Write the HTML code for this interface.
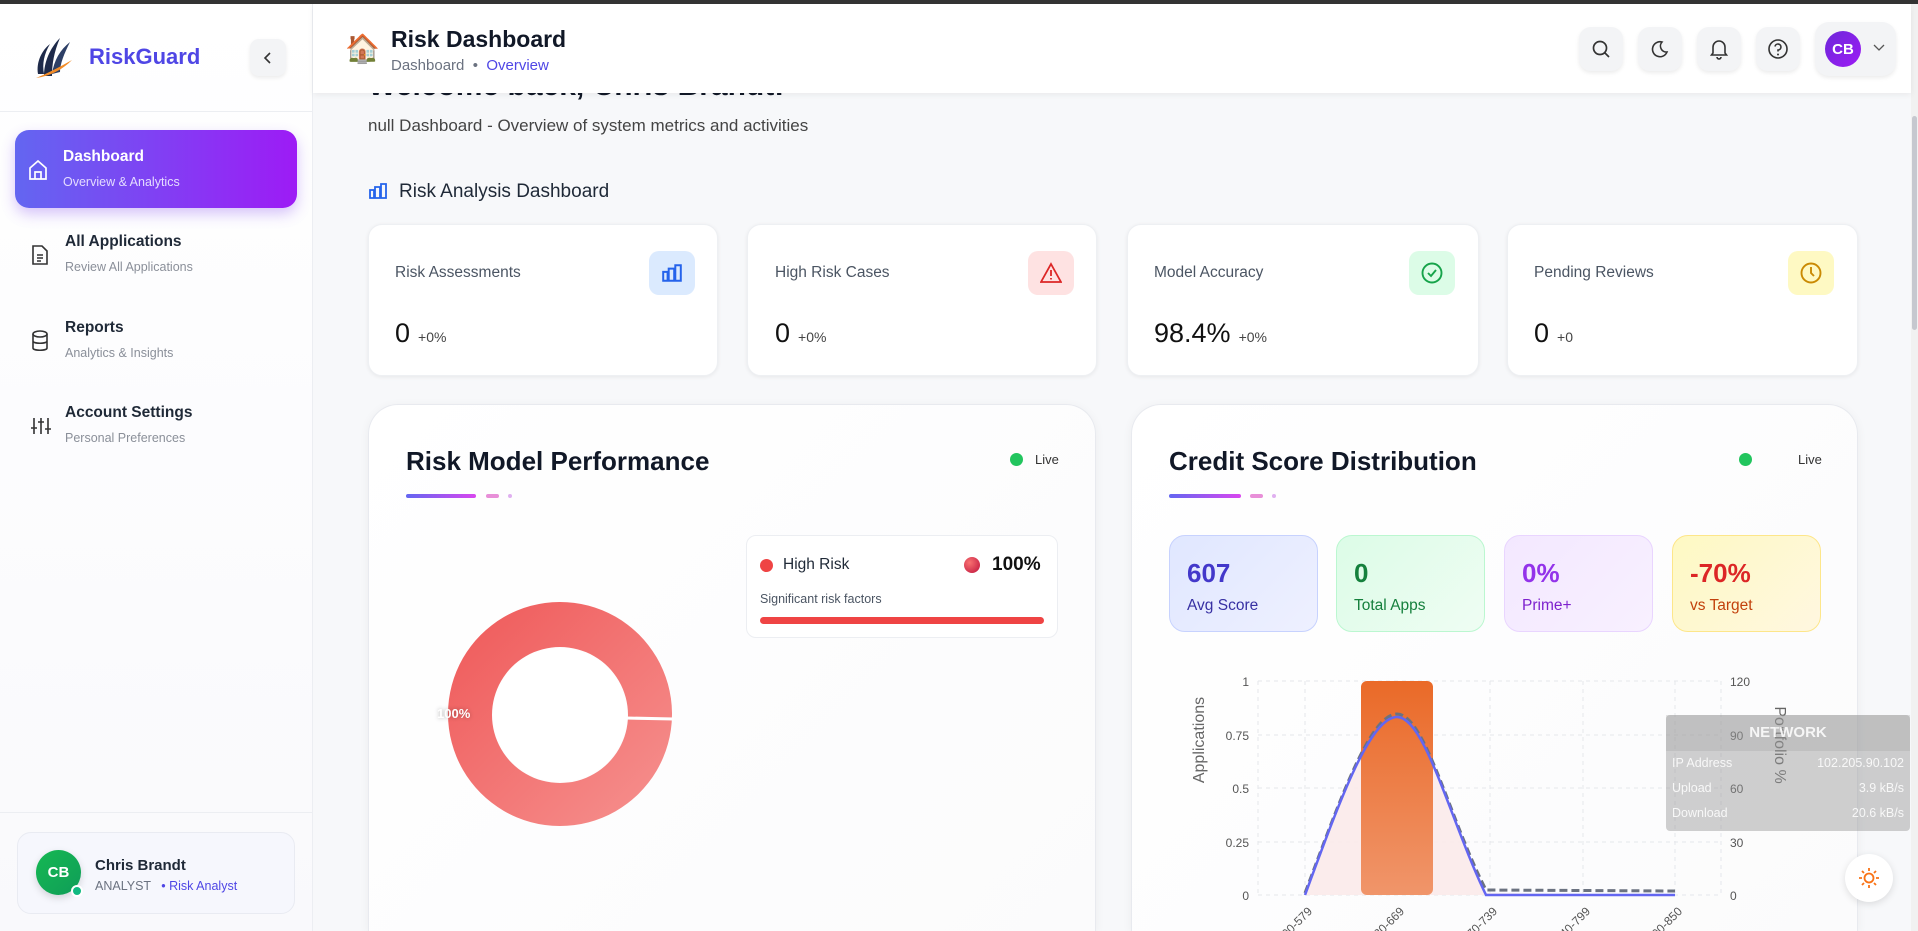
<!DOCTYPE html>
<html style="width:1918px;height:931px;overflow:hidden"><head><meta charset="utf-8"><style>
*{box-sizing:border-box;margin:0;padding:0}
body{width:1918px;height:931px;overflow:hidden;background:#f7f8fa;font-family:"Liberation Sans",sans-serif;position:relative;color:#111827}
.a{position:absolute}
.topbar{left:0;top:0;width:1918px;height:4px;background:#333;z-index:5}
.side{left:0;top:4px;width:313px;height:927px;background:linear-gradient(180deg,#fff,#f9f9fc);border-right:1px solid #eceef2}
.nav .t{font-size:15.5px;font-weight:bold;color:#1f2937}
.nav .s{font-size:12.5px;color:#8a8f99;margin-top:9px}
.hdr{left:313px;top:4px;width:1598px;height:89px;background:#fff;box-shadow:0 2px 6px rgba(0,0,0,.06);z-index:3}
.hb{width:44px;height:44px;border-radius:12px;background:#f3f4f6;box-shadow:0 2px 4px rgba(0,0,0,.08);display:flex;align-items:center;justify-content:center}
.card{background:#fff;border-radius:14px;box-shadow:0 1px 4px rgba(0,0,0,.07);border:1px solid #eef0f3}
.lbl{font-size:15.5px;color:#4b5563}
.val{font-size:27px;color:#111}
.val small{font-size:14px;color:#444;margin-left:8px}
.ib{width:46px;height:44px;border-radius:10px;display:flex;align-items:center;justify-content:center}
.big{background:linear-gradient(135deg,#fff,#fbfbfc);border-radius:30px 30px 0 0;border:1px solid #e8eaef;border-bottom:none;box-shadow:0 2px 10px rgba(0,0,0,.05)}
.bt{font-size:26px;font-weight:bold;color:#111827}
.mini{border-radius:16px;padding:22px 17px}
.mini b{font-size:26px;display:block}
.mini span{font-size:15.5px;display:block;margin-top:8px}
</style></head><body>
<div class="a topbar"></div>
<div class="a side">
  <svg class="a" style="left:32px;top:30px" width="44" height="48" viewBox="0 0 44 48">
    <path d="M6 40 C4 28 10 16 18 10 C12 20 10 30 12 40Z" fill="#1e2a4a"/>
    <path d="M12 42 C12 28 18 14 28 4 C22 18 20 30 20 42Z" fill="#1e2a4a"/>
    <path d="M20 40 C22 26 28 16 38 8 C32 20 28 30 28 38Z" fill="#2d3f66"/>
    <path d="M4 44 C14 40 26 34 40 26 C30 36 18 42 4 44Z" fill="#f28c28"/>
  </svg>
  <div class="a" style="left:89px;top:40px;font-size:22px;font-weight:bold;color:#4f46e5">RiskGuard</div>
  <div class="a hb" style="left:250px;top:35px;width:36px;height:37px;border-radius:9px;background:#f3f4f6"><svg width="14" height="14" viewBox="0 0 14 14"><path d="M9 2 L4 7 L9 12" fill="none" stroke="#333" stroke-width="1.6"/></svg></div>
  <div class="a" style="left:0;top:107px;width:313px;height:1px;background:#eceef2"></div>
  <div class="a" style="left:15px;top:126px;width:282px;height:78px;border-radius:14px;background:linear-gradient(90deg,#6366f1,#9d1bf5);box-shadow:0 6px 14px rgba(124,58,237,.3)"></div>
  <svg class="a" style="left:28px;top:155px" width="20" height="22" viewBox="0 0 20 22"><path d="M2 9 L10 2 L18 9 V20 H2Z M7 20 V13 H13 V20" fill="none" stroke="#fff" stroke-width="1.7"/></svg>
  <div class="a nav" style="left:63px;top:144px"><div class="t" style="color:#fff">Dashboard</div><div class="s" style="color:#e4dcff">Overview &amp; Analytics</div></div>
  <svg class="a" style="left:31px;top:240px" width="18" height="22" viewBox="0 0 18 22"><path d="M2 2 H11 L16 7 V20 H2Z M6 11 H12 M6 14 H12 M6 17 H10" fill="none" stroke="#333" stroke-width="1.6"/></svg>
  <div class="a nav" style="left:65px;top:229px"><div class="t">All Applications</div><div class="s">Review All Applications</div></div>
  <svg class="a" style="left:31px;top:326px" width="18" height="22" viewBox="0 0 18 22"><ellipse cx="9" cy="4" rx="7" ry="3" fill="none" stroke="#333" stroke-width="1.6"/><path d="M2 4 V18 C2 21 16 21 16 18 V4 M2 11 C2 14 16 14 16 11" fill="none" stroke="#333" stroke-width="1.6"/></svg>
  <div class="a nav" style="left:65px;top:315px"><div class="t">Reports</div><div class="s">Analytics &amp; Insights</div></div>
  <svg class="a" style="left:30px;top:412px" width="22" height="20" viewBox="0 0 22 20"><path d="M4 2 V18 M11 2 V18 M18 2 V18 M1 12 H7 M8 6 H14 M15 13 H21" fill="none" stroke="#333" stroke-width="1.6"/></svg>
  <div class="a nav" style="left:65px;top:400px"><div class="t">Account Settings</div><div class="s">Personal Preferences</div></div>
  <div class="a" style="left:0;top:808px;width:313px;height:1px;background:#eceef2"></div>
  <div class="a" style="left:17px;top:828px;width:278px;height:82px;border-radius:14px;background:#f6f7fd;border:1px solid #e9ebf2"></div>
  <div class="a" style="left:36px;top:846px;width:45px;height:45px;border-radius:50%;background:linear-gradient(135deg,#16b853,#0f9d58);color:#fff;font-weight:bold;font-size:15px;display:flex;align-items:center;justify-content:center;box-shadow:0 3px 8px rgba(0,0,0,.15)">CB</div>
  <div class="a" style="left:71px;top:881px;width:12px;height:12px;border-radius:50%;background:#10b981;border:2px solid #fff"></div>
  <div class="a" style="left:95px;top:853px;font-size:15px;font-weight:bold;color:#1f2937">Chris Brandt</div>
  <div class="a" style="left:95px;top:875px;font-size:12.5px;color:#6b7280">ANALYST &nbsp; <span style="color:#4f46e5">• Risk Analyst</span></div>
</div>
<div class="a" style="left:368px;top:69px;font-size:30px;font-weight:bold;color:#111827;white-space:nowrap">Welcome back, Chris Brandt!</div>
<div class="a hdr">
  <div class="a" style="left:32px;top:28px;font-size:28px">🏠</div>
  <div class="a" style="left:78px;top:22px;font-size:23px;font-weight:bold;color:#111827">Risk Dashboard</div>
  <div class="a" style="left:78px;top:53px;font-size:15px;color:#6b7280">Dashboard &nbsp;•&nbsp; <span style="color:#4f46e5">Overview</span></div>
  <div class="a hb" style="left:1266px;top:23px"><svg width="20" height="20" viewBox="0 0 20 20"><circle cx="9" cy="9" r="6.5" fill="none" stroke="#333" stroke-width="1.7"/><path d="M14 14 L18 18" stroke="#333" stroke-width="1.7"/></svg></div>
  <div class="a hb" style="left:1325px;top:23px"><svg width="20" height="20" viewBox="0 0 20 20"><path d="M12 3 A7.5 7.5 0 1 0 17 13 A6 6 0 0 1 12 3Z" fill="none" stroke="#333" stroke-width="1.6"/></svg></div>
  <div class="a hb" style="left:1384px;top:23px"><svg width="20" height="22" viewBox="0 0 20 22"><path d="M4 15 V9 A6 6 0 0 1 16 9 V15 L17.5 17 H2.5Z M8 19 A2 2 0 0 0 12 19" fill="none" stroke="#333" stroke-width="1.6"/></svg></div>
  <div class="a hb" style="left:1443px;top:23px"><svg width="22" height="22" viewBox="0 0 22 22"><circle cx="11" cy="11" r="9" fill="none" stroke="#333" stroke-width="1.6"/><path d="M8 8.5 A3 3 0 1 1 11 12 V13.5" fill="none" stroke="#333" stroke-width="1.6"/><circle cx="11" cy="16.5" r="1" fill="#333"/></svg></div>
  <div class="a hb" style="left:1502px;top:18px;width:81px;height:54px;border-radius:14px"></div>
  <div class="a" style="left:1512px;top:27px;width:36px;height:36px;border-radius:50%;background:linear-gradient(135deg,#6d28d9,#9d1bf5);color:#fff;font-weight:bold;font-size:15px;display:flex;align-items:center;justify-content:center">CB</div>
  <svg class="a" style="left:1560px;top:40px" width="12" height="8" viewBox="0 0 12 8"><path d="M1 1 L6 6 L11 1" fill="none" stroke="#555" stroke-width="1.3"/></svg>
</div>
<div class="a" style="left:1911px;top:4px;width:7px;height:927px;background:#f1f1f1"></div>
<div class="a" style="left:1912px;top:116px;width:5px;height:214px;border-radius:3px;background:#c6c8cf"></div>

<div class="a" style="left:368px;top:116px;font-size:17px;color:#444">null Dashboard - Overview of system metrics and activities</div>
<svg class="a" style="left:368px;top:181px" width="20" height="20" viewBox="0 0 20 20"><path d="M2 9 H6 V17 H2Z M7 6 H12 V17 H7Z M13 3 H18 V17 H13Z" fill="none" stroke="#2563eb" stroke-width="1.8"/></svg>
<div class="a" style="left:399px;top:181px;font-size:19px;color:#1f2937">Risk Analysis Dashboard</div>

<div class="a card" style="left:368px;top:224px;width:350px;height:152px"></div>
<div class="a card" style="left:747px;top:224px;width:350px;height:152px"></div>
<div class="a card" style="left:1127px;top:224px;width:352px;height:152px"></div>
<div class="a card" style="left:1507px;top:224px;width:351px;height:152px"></div>
<div class="a lbl" style="left:395px;top:264px">Risk Assessments</div>
<div class="a lbl" style="left:775px;top:264px">High Risk Cases</div>
<div class="a lbl" style="left:1154px;top:264px">Model Accuracy</div>
<div class="a lbl" style="left:1534px;top:264px">Pending Reviews</div>
<div class="a val" style="left:395px;top:318px">0<small>+0%</small></div>
<div class="a val" style="left:775px;top:318px">0<small>+0%</small></div>
<div class="a val" style="left:1154px;top:318px">98.4%<small>+0%</small></div>
<div class="a val" style="left:1534px;top:318px">0<small>+0</small></div>
<div class="a ib" style="left:649px;top:251px;background:#dbeafe"><svg width="22" height="22" viewBox="0 0 20 20"><path d="M2 9 H6 V17 H2Z M7 6 H12 V17 H7Z M13 3 H18 V17 H13Z" fill="none" stroke="#2563eb" stroke-width="1.8"/></svg></div>
<div class="a ib" style="left:1028px;top:251px;background:#fee2e2"><svg width="22" height="22" viewBox="0 0 22 22"><path d="M11 2 L21 20 H1Z M11 8 V14 M11 16 V17.5" fill="none" stroke="#dc2626" stroke-width="1.8"/></svg></div>
<div class="a ib" style="left:1409px;top:251px;background:#dcfce7"><svg width="24" height="24" viewBox="0 0 24 24"><circle cx="12" cy="12" r="9.5" fill="none" stroke="#16a34a" stroke-width="1.9"/><path d="M8 12 L11 15 L16 9" fill="none" stroke="#16a34a" stroke-width="1.9"/></svg></div>
<div class="a ib" style="left:1788px;top:251px;background:#fef9c3"><svg width="24" height="24" viewBox="0 0 24 24"><circle cx="12" cy="12" r="9.5" fill="none" stroke="#ca8a04" stroke-width="1.9"/><path d="M12 6 V12 L15 15" fill="none" stroke="#ca8a04" stroke-width="1.9"/></svg></div>

<div class="a big" style="left:368px;top:404px;width:728px;height:527px"></div>
<div class="a big" style="left:1131px;top:404px;width:727px;height:527px"></div>
<div class="a bt" style="left:406px;top:446px">Risk Model Performance</div>
<div class="a bt" style="left:1169px;top:446px">Credit Score Distribution</div>
<div class="a" style="left:1010px;top:453px;width:13px;height:13px;border-radius:50%;background:#22c55e"></div>
<div class="a" style="left:1035px;top:452px;font-size:13px;color:#333">Live</div>
<div class="a" style="left:1739px;top:453px;width:13px;height:13px;border-radius:50%;background:#22c55e"></div>
<div class="a" style="left:1798px;top:452px;font-size:13px;color:#333">Live</div>
<div class="a" style="left:406px;top:494px;width:70px;height:4px;border-radius:2px;background:linear-gradient(90deg,#6366f1,#d946ef)"></div>
<div class="a" style="left:486px;top:494px;width:13px;height:4px;border-radius:2px;background:#e88fd8"></div>
<div class="a" style="left:508px;top:494px;width:4px;height:4px;border-radius:2px;background:#e0b0f0"></div>
<div class="a" style="left:1169px;top:494px;width:72px;height:4px;border-radius:2px;background:linear-gradient(90deg,#6366f1,#d946ef)"></div>
<div class="a" style="left:1250px;top:494px;width:13px;height:4px;border-radius:2px;background:#e88fd8"></div>
<div class="a" style="left:1272px;top:494px;width:4px;height:4px;border-radius:2px;background:#e0b0f0"></div>

<svg class="a" style="left:440px;top:595px" width="240" height="240" viewBox="0 0 240 240">
  <defs><linearGradient id="dg" x1="0" y1="0" x2="1" y2="1"><stop offset="0" stop-color="#ef5858"/><stop offset="1" stop-color="#f69290"/></linearGradient></defs>
  <path fill-rule="evenodd" fill="url(#dg)" d="M232 120 A112 112 0 1 1 232 118 Z M188 120 A68 68 0 1 0 188 120.01 Z"/>
  <path d="M186 123 L234 124" stroke="#fff" stroke-width="3"/>
  <circle cx="120" cy="120" r="67" fill="#fff"/>
</svg>
<div class="a" style="left:437px;top:706px;font-size:13px;font-weight:bold;color:#fff;text-shadow:0 0 4px rgba(0,0,0,.3)">100%</div>
<div class="a" style="left:746px;top:535px;width:312px;height:103px;border-radius:10px;background:#fff;border:1px solid #eceef2"></div>
<div class="a" style="left:760px;top:559px;width:13px;height:13px;border-radius:50%;background:#ef4444"></div>
<div class="a" style="left:783px;top:556px;font-size:15.5px;color:#1f2937">High Risk</div>
<div class="a" style="left:964px;top:557px;width:16px;height:16px;border-radius:50%;background:radial-gradient(circle at 35% 35%,#f87171,#be123c)"></div>
<div class="a" style="left:992px;top:554px;font-size:19px;font-weight:bold;color:#111">100%</div>
<div class="a" style="left:760px;top:592px;font-size:12.5px;color:#4b5563">Significant risk factors</div>
<div class="a" style="left:760px;top:617px;width:284px;height:7px;border-radius:4px;background:#ef4444"></div>

<div class="a mini" style="left:1169px;top:535px;width:149px;height:97px;background:linear-gradient(135deg,#e0e7ff,#eef0ff);border:1px solid #c7d2fe"><b style="color:#4338ca">607</b><span style="color:#3730a3">Avg Score</span></div>
<div class="a mini" style="left:1336px;top:535px;width:149px;height:97px;background:linear-gradient(135deg,#dcfce7,#effdf3);border:1px solid #bbf7d0"><b style="color:#15803d">0</b><span style="color:#15803d">Total Apps</span></div>
<div class="a mini" style="left:1504px;top:535px;width:149px;height:97px;background:linear-gradient(135deg,#f3e8ff,#f8f0ff);border:1px solid #e9d5ff"><b style="color:#9333ea">0%</b><span style="color:#7e22ce">Prime+</span></div>
<div class="a mini" style="left:1672px;top:535px;width:149px;height:97px;background:linear-gradient(135deg,#fef9c3,#fff7e0);border:1px solid #fde68a"><b style="color:#dc2626">-70%</b><span style="color:#c2410c">vs Target</span></div>

<svg class="a" style="left:1131px;top:660px" width="780" height="271" viewBox="1131 660 780 271" font-family="Liberation Sans, sans-serif">
  <defs><linearGradient id="bg" x1="0" y1="0" x2="0" y2="1"><stop offset="0" stop-color="#ea6a28"/><stop offset="1" stop-color="#f0956a"/></linearGradient></defs>
  <g stroke="#e5e7eb" stroke-dasharray="4 4" stroke-width="1">
    <path d="M1258 681 H1721 M1258 735 H1721 M1258 788 H1721 M1258 842 H1721 M1258 895 H1721"/>
    <path d="M1258 681 V895 M1305 681 V895 M1397 681 V895 M1490 681 V895 M1583 681 V895 M1675 681 V895 M1721 681 V895"/>
  </g>
  <path d="M1305 895 C1340 800 1370 717 1397 717 C1425 717 1450 820 1486 893 L1675 895 Z" fill="#fbeaea" opacity=".9"/>
  <rect x="1361" y="681" width="72" height="214" rx="6" fill="url(#bg)"/>
  <path d="M1305 893 C1340 800 1370 714 1397 714 C1425 714 1450 820 1486 890 L1675 891" fill="none" stroke="#6b7280" stroke-width="3" stroke-dasharray="8 4"/>
  <path d="M1305 895 C1340 800 1370 717 1397 717 C1425 717 1450 820 1486 895 L1675 895" fill="none" stroke="#6366f1" stroke-width="2.5"/>
  <g font-size="12" fill="#555" text-anchor="end">
    <text x="1249" y="686">1</text><text x="1249" y="740">0.75</text><text x="1249" y="793">0.5</text><text x="1249" y="847">0.25</text><text x="1249" y="900">0</text>
  </g>
  <g font-size="12" fill="#555">
    <text x="1730" y="686">120</text><text x="1730" y="740">90</text><text x="1730" y="793">60</text><text x="1730" y="847">30</text><text x="1730" y="900">0</text>
  </g>
  <text transform="translate(1204 740) rotate(-90)" font-size="16" fill="#666" text-anchor="middle">Applications</text>
  <text transform="translate(1775 745) rotate(90)" font-size="16" fill="#666" text-anchor="middle">Portfolio %</text>
  <g font-size="12" fill="#555" text-anchor="end">
    <text transform="translate(1313 912) rotate(-45)">500-579</text>
    <text transform="translate(1405 912) rotate(-45)">580-669</text>
    <text transform="translate(1498 912) rotate(-45)">670-739</text>
    <text transform="translate(1591 912) rotate(-45)">740-799</text>
    <text transform="translate(1683 912) rotate(-45)">800-850</text>
  </g>
</svg>

<div class="a" style="left:1666px;top:715px;width:244px;height:116px;border-radius:4px;background:rgba(150,150,150,.45);color:rgba(255,255,255,.85);font-size:12.5px">
  <div style="height:36px;line-height:36px;text-align:center;font-size:15px;font-weight:bold;background:rgba(150,150,150,.25)">NETWORK</div>
  <div style="display:flex;justify-content:space-between;padding:0 6px;line-height:25px"><span>IP Address</span><span>102.205.90.102</span></div>
  <div style="display:flex;justify-content:space-between;padding:0 6px;line-height:25px"><span>Upload</span><span>3.9 kB/s</span></div>
  <div style="display:flex;justify-content:space-between;padding:0 6px;line-height:25px"><span>Download</span><span>20.6 kB/s</span></div>
</div>
<div class="a" style="left:1845px;top:854px;width:48px;height:48px;border-radius:50%;background:#fff;box-shadow:0 2px 8px rgba(0,0,0,.12);display:flex;align-items:center;justify-content:center">
  <svg width="22" height="22" viewBox="0 0 22 22"><circle cx="11" cy="11" r="4.5" fill="none" stroke="#f97316" stroke-width="1.8"/><path d="M11 1 V4 M11 18 V21 M1 11 H4 M18 11 H21 M4 4 L6 6 M16 16 L18 18 M4 18 L6 16 M16 6 L18 4" stroke="#f97316" stroke-width="1.8"/></svg>
</div>
</body></html>
